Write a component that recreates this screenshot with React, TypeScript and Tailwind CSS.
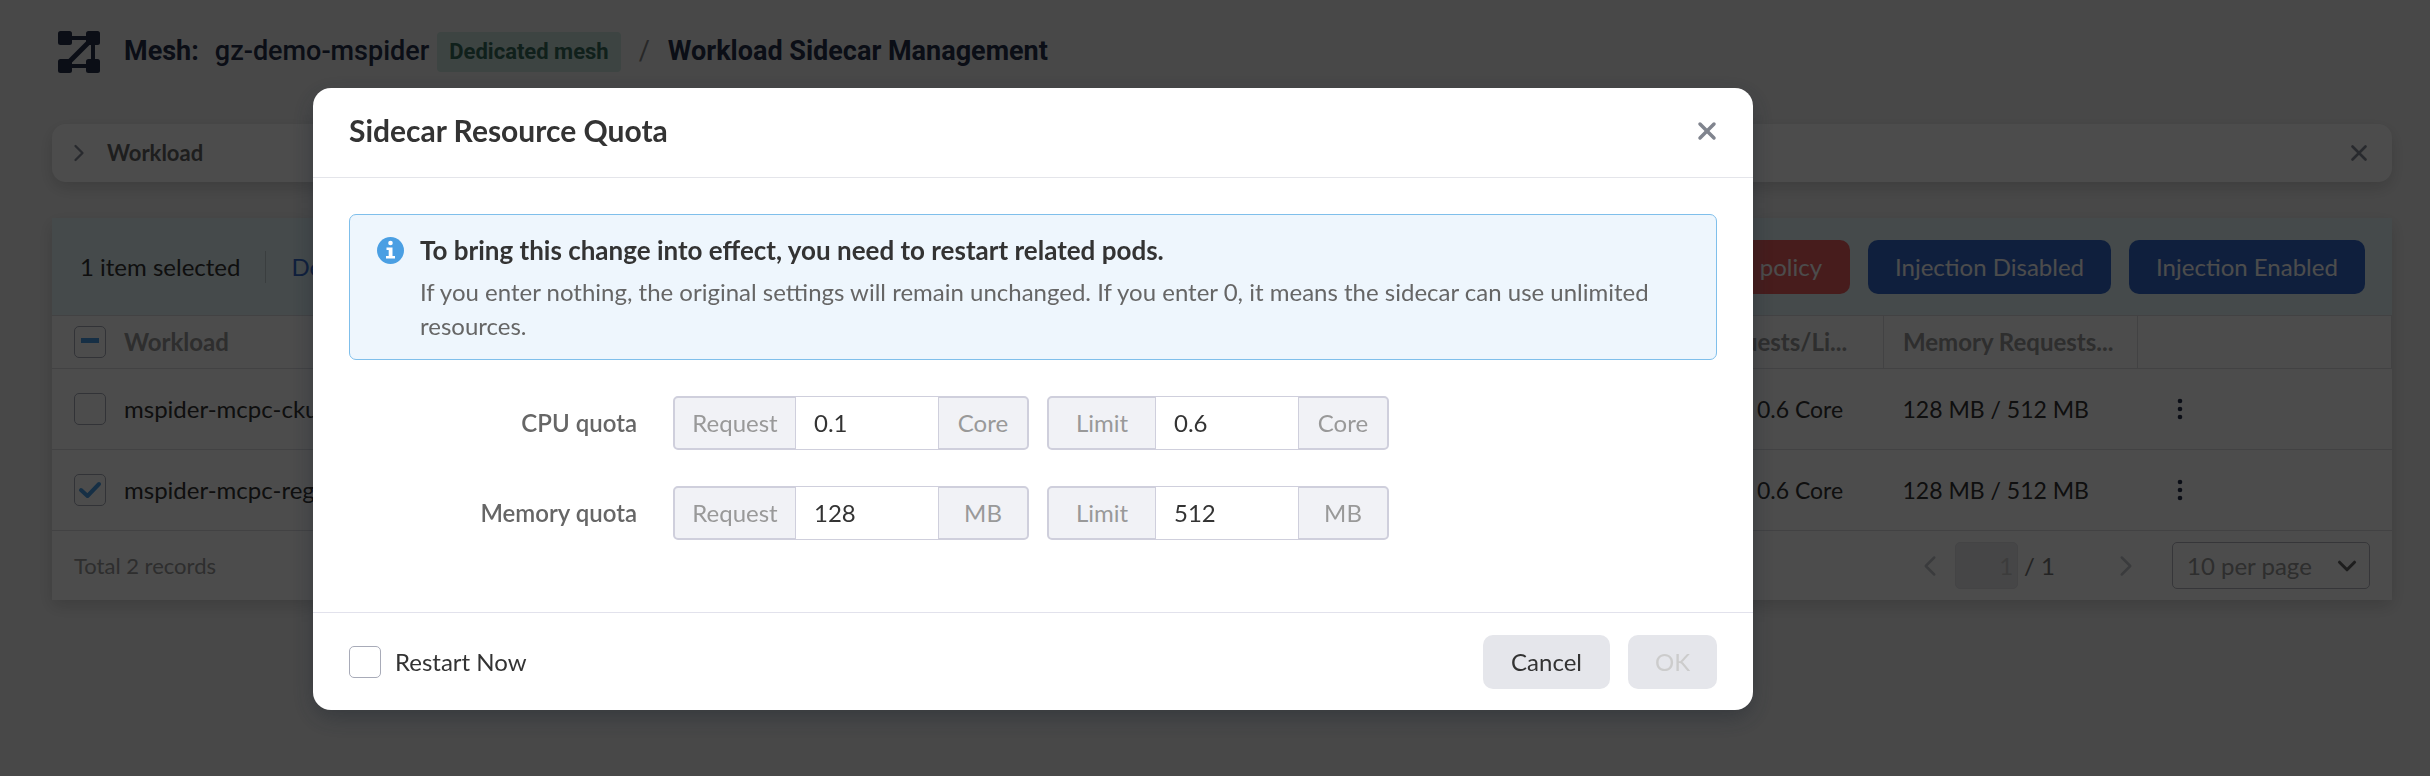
import { useState } from 'react';
import type { ReactNode } from 'react';
import { ChevronDown, ChevronLeft, ChevronRight, X } from 'lucide-react';

const workloads = [
  { name: 'mspider-mcpc-cku', cpu: '0.1 Core / 0.6 Core', memory: '128 MB / 512 MB' },
  { name: 'mspider-mcpc-reg', cpu: '0.1 Core / 0.6 Core', memory: '128 MB / 512 MB' },
];

const quotas = [
  { id: 'cpu', label: 'CPU quota', unit: 'Core', request: '0.1', limit: '0.6' },
  { id: 'memory', label: 'Memory quota', unit: 'MB', request: '128', limit: '512' },
];

interface CheckboxProps {
  id: string;
  label: string;
  checked: boolean;
  partial?: boolean;
  onChange: () => void;
}

function Checkbox({ id, label, checked, partial, onChange }: CheckboxProps) {
  return (
    <span className="grid size-8 shrink-0 place-items-center">
      <input
        id={id}
        type="checkbox"
        aria-label={label}
        checked={checked}
        onChange={onChange}
        className="col-start-1 row-start-1 size-8 appearance-none rounded-[5px] border border-[#a8abb8] bg-white"
      />
      {(checked || partial) && (
        <svg viewBox="0 0 32 32" className="pointer-events-none col-start-1 row-start-1 size-8" fill="none" stroke="#4a9fe8">
          {partial ? (
            <path d="M7 14.5h18" strokeWidth="5" />
          ) : (
            <path d="M7 16l6.500 6L25 10" strokeWidth="4" strokeLinecap="round" strokeLinejoin="round" />
          )}
        </svg>
      )}
    </span>
  );
}

function MeshLogo() {
  return (
    <svg viewBox="0 0 42 42" className="size-[42px]" fill="#252f4a" stroke="#252f4a">
      <path d="M7 7h28v28H7" fill="none" strokeWidth="4" />
      <path d="M8 34L33 9" strokeWidth="5" />
      <g stroke="none">
        <rect width="14" height="14" rx="2.500" />
        <rect x="28" width="14" height="14" rx="2.500" />
        <rect y="28" width="14" height="14" rx="2.500" />
        <rect x="28" y="28" width="14" height="14" rx="2.500" />
      </g>
    </svg>
  );
}

function InfoIcon() {
  return (
    <svg viewBox="0 0 27 27" className="mt-[10px] size-[27px] shrink-0">
      <circle cx="13.500" cy="13.500" r="13.500" fill="#4a9fe3" />
      <circle cx="13.500" cy="6" r="2.300" fill="#fff" />
      <path d="M9.500 10.500h6v8.500h2.500v2.500H9V19h2.700v-6H9.500z" fill="#fff" />
    </svg>
  );
}

function DotsIcon() {
  return (
    <svg viewBox="0 0 6 22" className="h-[22px] w-[6px]" fill="#252f4a">
      <circle cx="3" cy="3" r="2.300" />
      <circle cx="3" cy="11" r="2.300" />
      <circle cx="3" cy="19" r="2.300" />
    </svg>
  );
}

function Addon({ side, className, children }: { side: 'left' | 'right'; className: string; children: ReactNode }) {
  return (
    <span
      className={`flex items-center justify-center border-2 border-[#cfcfdc] bg-[#f1f2f6] text-[#999] ${
        side === 'left' ? 'rounded-l-[5px] border-r' : 'rounded-r-[5px] border-l'
      } ${className}`}
    >
      {children}
    </span>
  );
}

interface QuotaFieldProps {
  id: string;
  label: string;
  labelWidth: string;
  unit: string;
  value: string;
}

function QuotaField({ id, label, labelWidth, unit, value }: QuotaFieldProps) {
  const [current, setCurrent] = useState(value);

  return (
    <div className="flex h-[54px]">
      <label htmlFor={id} className="flex">
        <Addon side="left" className={labelWidth}>{label}</Addon>
      </label>
      <input
        id={id}
        type="text"
        value={current}
        onChange={(e) => setCurrent(e.target.value)}
        className="w-[142px] border-y border-[#cfcfdc] px-[18px] text-[#333] outline-none"
      />
      <Addon side="right" className="w-[91px]">{unit}</Addon>
    </div>
  );
}

function QuotaDialog() {
  const [restart, setRestart] = useState(false);

  return (
    <div className="fixed inset-0 flex items-start justify-center bg-black/70 pt-[88px] pr-[364px]">
      <div role="dialog" aria-labelledby="dialog-title" className="w-full max-w-[1440px] rounded-[18px] bg-white text-2xl shadow-[0_8px_24px_rgba(20,30,40,0.35)]">
        <header className="flex h-[90px] items-center justify-between border-b border-[#e4e5ea] px-9 pb-1">
          <h2 id="dialog-title" className="text-[30px] font-bold text-[#333]">Sidecar Resource Quota</h2>
          <button type="button" aria-label="Close" className="text-[#80848e]">
            <X className="-mr-1 size-7" strokeWidth={3} />
          </button>
        </header>

        <div className="px-9 pt-9 pb-[72px]">
          <div className="flex gap-4 rounded-[7px] border border-[#7fbfeb] bg-[#eef6fd] px-[27px] pt-3 pb-4">
            <InfoIcon />
            <div>
              <p className="text-[26px] leading-[46px] font-bold text-[#333]">
                To bring this change into effect, you need to restart related pods.
              </p>
              <p className="mt-[2px] leading-[34px] text-[#666]">
                If you enter nothing, the original settings will remain unchanged. If you enter 0, it means the sidecar can use unlimited resources.
              </p>
            </div>
          </div>

          <div className="mt-9 flex flex-col gap-9">
            {quotas.map((quota) => (
              <div key={quota.id} className="flex items-center">
                <span className="w-[288px] text-right font-semibold text-[#666]">{quota.label}</span>
                <div className="ml-9 flex gap-[18px]">
                  <QuotaField id={`${quota.id}-request`} label="Request" labelWidth="w-[123px]" unit={quota.unit} value={quota.request} />
                  <QuotaField id={`${quota.id}-limit`} label="Limit" labelWidth="w-[109px]" unit={quota.unit} value={quota.limit} />
                </div>
              </div>
            ))}
          </div>
        </div>

        <footer className="flex h-[98px] items-center justify-between border-t border-[#e2e2ec] px-9">
          <label htmlFor="restart" className="flex items-center gap-[14px] text-[#333]">
            <Checkbox id="restart" label="Restart Now" checked={restart} onChange={() => setRestart(!restart)} />
            Restart Now
          </label>
          <div className="flex gap-[18px]">
            <button type="button" className="h-[54px] w-[127px] rounded-[10px] bg-[#e5e6eb] text-[#333]">Cancel</button>
            <button type="button" disabled className="h-[54px] w-[89px] rounded-[10px] bg-[#e5e6eb] text-[#ccc]">OK</button>
          </div>
        </footer>
      </div>
    </div>
  );
}

export default function App() {
  const [selected, setSelected] = useState([false, true]);
  const count = selected.filter(Boolean).length;

  const toggle = (index: number) => {
    setSelected(selected.map((value, i) => (i === index ? !value : value)));
  };

  return (
    <div className="min-h-screen bg-[#f2f2f2] font-['Lato','Open_Sans',sans-serif] text-2xl text-[#333]">
      {/* Breadcrumb */}
      <header className="flex h-[104px] items-center pl-[58px] font-['Roboto',sans-serif] text-[27px] text-[#252f4a]">
        <MeshLogo />
        <span className="ml-6 font-bold">Mesh:</span>
        <span className="ml-4 font-medium">gz-demo-mspider</span>
        <span className="ml-2 flex h-10 items-center rounded bg-[#cbe3dc] px-3 text-[22px] font-bold text-[#376b5c]">Dedicated mesh</span>
        <span className="mx-[18px] text-[#888]">/</span>
        <h1 className="font-bold">Workload Sidecar Management</h1>
      </header>

      <main className="mt-5 flex flex-col gap-9 pr-[38px] pl-[52px]">
        <section className="flex h-[58px] items-center rounded-[14px] bg-white pr-5 pl-[13px] shadow-[0_6px_16px_rgba(0,0,0,0.15)]">
          <button type="button" className="flex items-center gap-[14px] text-[22px] font-bold text-[#666]">
            <ChevronRight className="size-7 text-[#888d99]" strokeWidth={2} />
            Workload
          </button>
          <button type="button" aria-label="Dismiss" className="ml-auto text-[#888d99]">
            <X className="size-[26px]" strokeWidth={2.5} />
          </button>
        </section>

        <section className="bg-white shadow-[0_6px_16px_rgba(0,0,0,0.15)]">
          <div className="flex h-[97px] items-center bg-[#e6f7fb] pr-[27px] pl-7">
            <span>{count} item selected</span>
            <span className="mx-[25px] h-8 w-px bg-[#c4d0d4]" />
            <a href="#deselect" className="text-[#3369cc]">Deselect</a>
            <div className="ml-auto flex gap-[18px] text-white">
              <button type="button" className="h-[54px] rounded-[10px] bg-[#ed5e5e] px-7">Delete policy</button>
              <button type="button" className="h-[54px] w-[243px] rounded-[10px] bg-[#3369cc]">Injection Disabled</button>
              <button type="button" className="h-[54px] w-[236px] rounded-[10px] bg-[#3369cc]">Injection Enabled</button>
            </div>
          </div>

          <table className="w-full table-fixed text-left">
            <thead>
              <tr className="h-[53px] border-y border-[#dcdde2] text-[#999]">
                <th className="pl-[22px]">
                  <div className="flex items-center gap-[18px]">
                    <Checkbox id="all" label="Select all" checked={count === 2} partial={count === 1} onChange={() => setSelected(selected.map(() => count < 2))} />
                    Workload
                  </div>
                </th>
                <th className="w-[254px] truncate border-r border-[#dcdde2] px-[19px]">CPU Requests/Li...</th>
                <th className="w-[254px] truncate border-r border-[#dcdde2] px-[19px]">Memory Requests...</th>
                <th className="w-[254px] border-r border-[#dcdde2]"></th>
              </tr>
            </thead>
            <tbody>
              {workloads.map((item, index) => (
                <tr key={item.name} className="h-[81px] border-b border-[#dcdde2]">
                  <td className="pl-[22px]">
                    <label htmlFor={`row-${index}`} className="flex items-center gap-[18px]">
                      <Checkbox id={`row-${index}`} label={item.name} checked={selected[index]} onChange={() => toggle(index)} />
                      {item.name}
                    </label>
                  </td>
                  <td className="px-[19px] text-[23px] whitespace-nowrap">{item.cpu}</td>
                  <td className="px-[19px] text-[23px] whitespace-nowrap">{item.memory}</td>
                  <td className="pl-[39px]">
                    <button type="button" aria-label="More actions" className="block">
                      <DotsIcon />
                    </button>
                  </td>
                </tr>
              ))}
            </tbody>
          </table>

          <footer className="flex h-[69px] items-center px-[22px] text-[#999]">
            <span className="text-[22px]">Total 2 records</span>
            <button type="button" disabled aria-label="Previous page" className="ml-auto text-[#c4c6cc]">
              <ChevronLeft className="size-[34px]" strokeWidth={1.8} />
            </button>
            <input
              type="text"
              aria-label="Page"
              defaultValue="1"
              disabled
              className="ml-2 h-[47px] w-[63px] rounded-[5px] border border-[#e4e4e8] bg-[#ebebee] px-1 text-right text-[#c8c8c8]"
            />
            <span className="ml-[6px] text-[#777]">/ 1</span>
            <button type="button" disabled aria-label="Next page" className="ml-[54px] text-[#c4c6cc]">
              <ChevronRight className="size-[34px]" strokeWidth={1.8} />
            </button>
            <span className="ml-[29px] grid items-center">
              <select aria-label="Page size" className="col-start-1 row-start-1 h-[47px] w-[198px] appearance-none rounded-[5px] border border-[#b4b6c0] pl-[14px]">
                <option>10 per page</option>
              </select>
              <ChevronDown className="pointer-events-none col-start-1 row-start-1 mr-2 size-[30px] justify-self-end text-[#666]" strokeWidth={2.5} />
            </span>
          </footer>
        </section>
      </main>

      <QuotaDialog />
    </div>
  );
}
